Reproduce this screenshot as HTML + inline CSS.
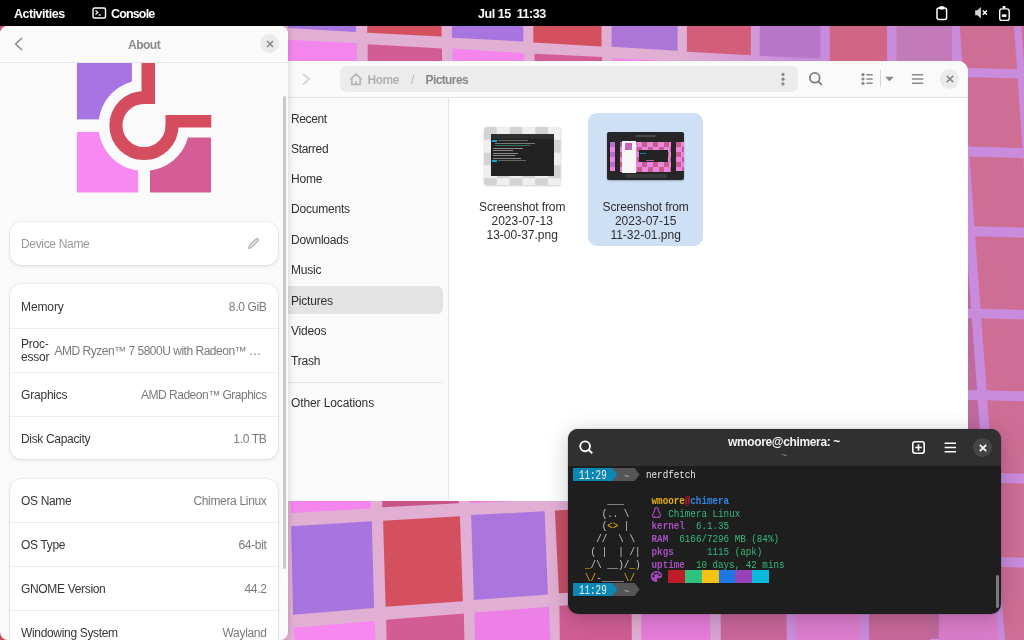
<!DOCTYPE html>
<html><head><meta charset="utf-8">
<style>
*{box-sizing:border-box}
html,body{margin:0;padding:0}
body{width:1024px;height:640px;overflow:hidden;position:relative;background:#cd6c8e;font-family:"Liberation Sans",sans-serif;font-size:12px;letter-spacing:-0.3px}
.a{position:absolute}
#top,#about,#fm,#term{will-change:transform}
.t{position:absolute;white-space:nowrap;line-height:14px}
.b{font-weight:bold;letter-spacing:-0.5px}
#wall{position:absolute;left:0;top:0}
#top{left:0;top:0;width:1024px;height:26px;background:#000;color:#fff}
#about{left:0;top:26px;width:288px;height:614px;background:#fafafa;border-radius:8px;box-shadow:0 0 8px rgba(0,0,0,.18);overflow:hidden}
#fm{left:288px;top:61px;width:680px;height:440px;background:#fff;border-radius:0 10px 0 0;overflow:hidden}
#term{left:568px;top:429px;width:433px;height:185px;background:#1e1e1e;border-radius:10px;overflow:hidden;box-shadow:0 0 0 1px rgba(0,0,0,.08),0 4px 22px rgba(0,0,0,.22)}
.card{position:absolute;left:10px;width:268px;background:#fff;border-radius:12px;box-shadow:0 0 0 1px rgba(0,0,0,.03),0 1px 3px 1px rgba(0,0,0,.07)}
.row{position:absolute;left:0;width:268px;height:44px;border-top:1px solid #ececec}
.lbl{color:#363636}
.dim{color:#7a7a7a}
.side{color:#303030;left:3px}
.mono{font-family:"Liberation Mono",monospace;letter-spacing:0}
</style></head>
<body>
<svg id="wall" width="1024" height="640" viewBox="0 0 1024 640">
<defs><linearGradient id="wg" x1="0" y1="0" x2="1024" y2="0" gradientUnits="userSpaceOnUse"><stop offset="0.66" stop-color="#e1afd3"/><stop offset="0.78" stop-color="#c98bdc"/></linearGradient></defs>
<rect width="1024" height="640" fill="url(#wg)"/>
<polygon points="0.0,0.0 30.0,0.0 30.0,60.0 0.0,60.0" fill="#d0568f"/>
<polygon points="0.0,600.0 30.0,600.0 30.0,640.0 0.0,640.0" fill="#cc4a60"/>
<polygon points="288.0,0.0 356.0,0.0 356.0,31.9 288.0,28.0" fill="#a874e0"/>
<polygon points="367.2,0.0 441.6,0.0 441.6,36.6 367.2,32.8" fill="#d4505f"/>
<polygon points="452.0,0.0 523.3,0.0 523.3,41.5 452.0,37.7" fill="#a874e0"/>
<polygon points="533.3,0.0 601.5,0.0 601.5,46.5 533.3,42.4" fill="#d4505f"/>
<polygon points="611.6,0.0 677.6,0.0 677.6,50.7 611.6,46.8" fill="#ac76d8"/>
<polygon points="686.9,0.0 750.9,0.0 750.9,55.2 686.9,51.7" fill="#d35e7c"/>
<polygon points="759.7,0.0 820.3,0.0 820.3,58.6 759.7,55.9" fill="#b877c8"/>
<polygon points="829.7,0.0 887.1,0.0 887.1,66.0 829.7,62.0" fill="#d06585"/>
<polygon points="896.6,0.0 952.1,0.0 952.1,69.0 896.6,66.0" fill="#c27ab8"/>
<polygon points="288.0,39.8 356.7,43.3 356.7,120.0 288.0,120.0" fill="#f385ed"/>
<polygon points="367.7,44.2 442.0,48.6 442.0,120.0 367.7,120.0" fill="#d35c94"/>
<polygon points="452.5,48.6 524.2,53.0 524.2,120.0 452.5,120.0" fill="#f385ed"/>
<polygon points="534.5,53.8 602.0,57.0 602.0,120.0 534.5,120.0" fill="#d35c94"/>
<polygon points="612.0,58.2 678.0,61.5 678.0,120.0 612.0,120.0" fill="#f385ed"/>
<polygon points="1017.0,-38.7 1100.0,-36.7 1100.0,71.2 1024.5,69.2" fill="#ce6e94"/>
<polygon points="963.5,76.9 1017.7,78.5 1022.6,148.2 968.6,146.6" fill="#ce6e94"/>
<polygon points="1025.2,78.5 1100.0,80.5 1100.0,150.2 1030.1,148.2" fill="#ce6e94"/>
<polygon points="900.0,75.5 954.0,76.9 959.1,146.6 900.0,145.2" fill="#bf6a9e"/>
<polygon points="969.4,156.6 1023.3,158.2 1028.1,227.8 974.5,226.2" fill="#ce6e94"/>
<polygon points="1030.8,158.2 1100.0,160.2 1100.0,229.8 1035.6,227.8" fill="#ce6e94"/>
<polygon points="900.0,155.2 959.9,156.6 965.0,226.2 900.0,224.8" fill="#bf6a9e"/>
<polygon points="975.2,236.2 1028.8,237.8 1033.9,310.3 980.6,308.7" fill="#ce6e94"/>
<polygon points="1036.3,237.8 1100.0,239.8 1100.0,312.3 1041.4,310.3" fill="#ce6e94"/>
<polygon points="900.0,234.8 965.7,236.2 971.1,308.7 900.0,307.3" fill="#bf6a9e"/>
<polygon points="981.3,318.3 1034.6,319.9 1039.6,391.8 986.6,390.2" fill="#ce6e94"/>
<polygon points="1042.1,319.9 1100.0,321.9 1100.0,393.8 1047.1,391.8" fill="#ce6e94"/>
<polygon points="900.0,316.9 971.8,318.3 977.1,390.2 900.0,388.8" fill="#bf6a9e"/>
<polygon points="987.3,400.2 1040.3,401.8 1045.4,474.3 992.6,472.7" fill="#ce6e94"/>
<polygon points="1047.8,401.8 1100.0,403.8 1100.0,476.3 1052.9,474.3" fill="#ce6e94"/>
<polygon points="900.0,398.8 977.8,400.2 983.1,472.7 900.0,471.3" fill="#bf6a9e"/>
<polygon points="993.4,482.7 1046.1,484.3 1051.3,558.6 998.8,557.0" fill="#ce6e94"/>
<polygon points="1053.6,484.3 1100.0,486.3 1100.0,560.6 1058.8,558.6" fill="#ce6e94"/>
<polygon points="900.0,481.3 983.9,482.7 989.3,557.0 900.0,555.6" fill="#bf6a9e"/>
<polygon points="999.6,567.0 1052.0,568.6 1057.1,641.3 1004.9,639.7" fill="#ce6e94"/>
<polygon points="1059.5,568.6 1100.0,570.6 1100.0,643.3 1064.6,641.3" fill="#ce6e94"/>
<polygon points="900.0,565.6 990.1,567.0 995.4,639.7 900.0,638.3" fill="#bf6a9e"/>
<polygon points="957.8,0.0 1012.2,0.0 1017.0,69.2 962.8,67.7" fill="#ce6e94"/>
<polygon points="290.8,470.0 370.7,470.0 370.7,508.6 290.8,512.9" fill="#f385ed"/>
<polygon points="382.3,470.0 458.8,470.0 458.8,503.3 382.3,507.3" fill="#c8548a"/>
<polygon points="470.0,470.0 546.0,470.0 546.0,499.5 470.0,503.0" fill="#e77fe0"/>
<polygon points="291.2,526.2 371.8,521.3 374.1,608.0 293.1,614.7" fill="#a874e0"/>
<polygon points="383.1,520.7 459.9,516.3 462.9,601.2 385.6,606.8" fill="#d4505f"/>
<polygon points="471.1,515.1 544.6,511.2 547.9,594.4 473.9,600.1" fill="#aa75dc"/>
<polygon points="554.9,510.4 640.0,506.0 643.0,589.0 558.9,593.3" fill="#c75068"/>
<polygon points="294.2,627.7 374.7,620.9 376.0,660.0 295.0,660.0" fill="#f688f0"/>
<polygon points="386.2,619.8 463.8,613.6 465.0,660.0 387.0,660.0" fill="#d35c94"/>
<polygon points="474.4,612.5 549.1,606.8 551.0,660.0 475.0,660.0" fill="#ec80e6"/>
<polygon points="559.4,605.7 631.5,601.0 632.0,660.0 560.0,660.0" fill="#cf5e93"/>
<polygon points="641.0,600.0 710.0,596.0 711.0,660.0 641.5,660.0" fill="#e67cd9"/>
<polygon points="720.5,595.0 786.2,591.0 787.0,660.0 721.0,660.0" fill="#c9669a"/>
<polygon points="795.5,590.0 859.7,587.0 860.5,660.0 796.0,660.0" fill="#dc7dcd"/>
<polygon points="868.8,586.0 929.9,583.0 930.5,660.0 869.3,660.0" fill="#c8689a"/>
<polygon points="938.5,582.0 994.0,580.0 1000.0,660.0 939.0,660.0" fill="#d97cc8"/>
</svg>

<!-- top bar -->
<div id="top" class="a">
  <div class="t b" style="left:14px;top:6.5px;font-size:12.5px">Activities</div>
  <svg class="a" style="left:92px;top:7px" width="15" height="12" viewBox="0 0 15 12"><rect x="1" y="1" width="12.5" height="10" rx="1.5" fill="none" stroke="#fff" stroke-width="1.4"/><path d="M3.5 3.5 L5.8 5.5 L3.5 7.5" fill="none" stroke="#fff" stroke-width="1.2"/><path d="M6.5 8 H9" stroke="#fff" stroke-width="1.1"/></svg>
  <div class="t b" style="left:111px;top:6.5px;font-size:12.5px;letter-spacing:-0.85px">Console</div>
  <div class="t b" style="left:478px;top:6.5px;font-size:12.5px;letter-spacing:-0.45px">Jul 15&nbsp;&nbsp;11:33</div>
  <svg class="a" style="left:930px;top:2px" width="84" height="22" viewBox="0 0 84 22">
    <rect x="7" y="5.9" width="9.6" height="11.6" rx="2" fill="none" stroke="#fff" stroke-width="1.5"/>
    <rect x="9.2" y="4.2" width="5.2" height="3.2" rx="1.2" fill="#fff"/>
    <path d="M45.2 8.3 H47.5 L50.9 4.9 V16.6 L47.5 13.2 H45.2 Z" fill="#d6d6d6"/>
    <path d="M52.8 8.6 L56.8 12.7 M56.8 8.6 L52.8 12.7" stroke="#fff" stroke-width="1.4"/>
    <rect x="69.7" y="6.9" width="9.5" height="11.5" rx="2.2" fill="none" stroke="#fff" stroke-width="1.4"/>
    <rect x="72.6" y="4.1" width="2.9" height="2.4" rx="0.8" fill="#fff"/>
    <rect x="71.9" y="12.4" width="4.5" height="2.5" fill="#fff"/>
  </svg>
</div>

<!-- file manager -->
<div id="fm" class="a">
 <div class="a" style="left:-288px;top:-61px;width:1024px;height:640px">
  <!-- header -->
  <div class="a" style="left:288px;top:61px;width:680px;height:37px;background:#fafafa;border-bottom:1px solid #e3e3e3"></div>
  <svg class="a" style="left:300px;top:72px" width="12" height="14" viewBox="0 0 12 14"><path d="M3 2.2 L9.3 6.8 L3 12.5" fill="none" stroke="#cfcfcf" stroke-width="1.5"/></svg>
  <div class="a" style="left:339.5px;top:65.7px;width:458px;height:26.8px;border-radius:6px;background:#ececec"></div>
  <svg class="a" style="left:348px;top:72px" width="16" height="14" viewBox="0 0 16 14"><path d="M2.2 7.6 L8 2 L13.8 7.6 M3.8 6.4 V12.4 H12.2 V6.4 M8 12.4 V9" fill="none" stroke="#b8b8b8" stroke-width="1.7" stroke-linejoin="round"/></svg>
  <div class="t b" style="left:367.5px;top:73.2px;color:#b2b2b2;letter-spacing:-0.45px">Home</div>
  <div class="t" style="left:411px;top:73.2px;color:#b5b5b5">/</div>
  <div class="t b" style="left:425.5px;top:73.2px;color:#878787;letter-spacing:-0.6px">Pictures</div>
  <svg class="a" style="left:779px;top:71px" width="8" height="16" viewBox="0 0 8 16"><circle cx="4" cy="3.4" r="1.6" fill="#8a8a8a"/><circle cx="4" cy="8.2" r="1.6" fill="#8a8a8a"/><circle cx="4" cy="12.9" r="1.6" fill="#8a8a8a"/></svg>
  <svg class="a" style="left:807px;top:70px" width="18" height="18" viewBox="0 0 18 18"><circle cx="7.8" cy="7.8" r="4.9" fill="none" stroke="#7c7c7c" stroke-width="1.8"/><path d="M11.3 11.3 L14.8 14.8" stroke="#7c7c7c" stroke-width="1.9"/></svg>
  <svg class="a" style="left:860px;top:72px" width="16" height="14" viewBox="0 0 16 14"><circle cx="3" cy="2.7" r="1.6" fill="#8a8a8a"/><circle cx="3" cy="7" r="1.6" fill="#8a8a8a"/><circle cx="3" cy="11.3" r="1.6" fill="#8a8a8a"/><path d="M6.3 2.7 H12.7 M6.3 7 H12.7 M6.3 11.3 H12.7" stroke="#8a8a8a" stroke-width="1.4"/></svg>
  <div class="a" style="left:880px;top:70.4px;width:1px;height:16.6px;background:#d6d6d6"></div>
  <svg class="a" style="left:884px;top:75px" width="11" height="8" viewBox="0 0 11 8"><path d="M1 1.7 H9.9 L5.45 6.2 Z" fill="#8a8a8a"/></svg>
  <svg class="a" style="left:910px;top:72px" width="15" height="14" viewBox="0 0 15 14"><path d="M1.9 2.7 H13.2 M1.9 7 H13.2 M1.9 11.3 H13.2" stroke="#8a8a8a" stroke-width="1.4"/></svg>
  <div class="a" style="left:939.8px;top:69.3px;width:19.4px;height:19.4px;border-radius:50%;background:#ebebeb"></div>
  <svg class="a" style="left:944.5px;top:74px" width="10" height="10" viewBox="0 0 10 10"><path d="M1.8 1.8 L8.2 8.2 M8.2 1.8 L1.8 8.2" stroke="#8a8a8a" stroke-width="1.7"/></svg>

  <!-- sidebar -->
  <div class="a" style="left:288px;top:98px;width:160.5px;height:403px;background:#fafafa;border-right:1px solid #e6e6e6"></div>
  <div class="a" style="left:280px;top:285.5px;width:163px;height:28.6px;border-radius:6px;background:#e3e3e3"></div>
  <div class="a" style="left:288px;top:381.5px;width:155px;height:1px;background:#e6e6e6"></div>
  <div class="t side" style="left:291px;top:111.6px;letter-spacing:-0.39px">Recent</div>
  <div class="t side" style="left:291px;top:141.7px;letter-spacing:-0.3px">Starred</div>
  <div class="t side" style="left:291px;top:172.0px;letter-spacing:-0.2px">Home</div>
  <div class="t side" style="left:291px;top:202.3px;letter-spacing:-0.2px">Documents</div>
  <div class="t side" style="left:291px;top:232.9px;letter-spacing:-0.2px">Downloads</div>
  <div class="t side" style="left:291px;top:263.3px;letter-spacing:-0.2px">Music</div>
  <div class="t side" style="left:291px;top:293.7px;letter-spacing:-0.2px">Pictures</div>
  <div class="t side" style="left:291px;top:324.2px;letter-spacing:-0.2px">Videos</div>
  <div class="t side" style="left:291px;top:354.3px;letter-spacing:-0.2px">Trash</div>
  <div class="t side" style="left:291px;top:395.5px;letter-spacing:-0.11px">Other Locations</div>

  <!-- files -->
  <div class="a" style="left:484.2px;top:127.3px;width:77px;height:57.4px;border-radius:3px;overflow:hidden;box-shadow:0 1px 2px rgba(0,0,0,.2);background:repeating-conic-gradient(#d3d3d3 0 25%,#efefef 0 50%) 12.8px 0/25.6px 25.6px"></div>
  <div class="a" style="left:491px;top:134.1px;width:62.9px;height:41.6px;background:#222">
    <div class="a" style="left:0;top:0;width:62.9px;height:5px;background:#2e2e2e"></div>
    <div class="a" style="left:1px;top:6px;width:5px;height:1.6px;background:#1e9bd0"></div>
    <div class="a" style="left:7px;top:6px;width:30px;height:1.2px;background:#666"></div>
    <div class="a" style="left:4px;top:9px;width:40px;height:1px;background:#777"></div>
    <div class="a" style="left:4px;top:11px;width:35px;height:1px;background:#2a7a5a"></div>
    <div class="a" style="left:2px;top:13.5px;width:30px;height:1px;background:#888"></div>
    <div class="a" style="left:2px;top:16px;width:20px;height:1px;background:#888"></div>
    <div class="a" style="left:2px;top:18.5px;width:25px;height:1px;background:#888"></div>
    <div class="a" style="left:2px;top:21px;width:22px;height:1px;background:#888"></div>
    <div class="a" style="left:2px;top:23.5px;width:28px;height:1px;background:#888"></div>
    <div class="a" style="left:1px;top:26px;width:5px;height:1.6px;background:#1e9bd0"></div>
    <div class="a" style="left:7px;top:26px;width:28px;height:1.2px;background:#666"></div>
  </div>
  <div class="t" style="left:479px;top:199.8px;width:86.3px;text-align:center;color:#2e2e2e;letter-spacing:-0.12px">Screenshot from</div>
  <div class="t" style="left:479px;top:213.5px;width:86.3px;text-align:center;color:#2e2e2e;letter-spacing:0">2023-07-13</div>
  <div class="t" style="left:479px;top:227.8px;width:86.3px;text-align:center;color:#2e2e2e;letter-spacing:0">13-00-37.png</div>

  <div class="a" style="left:588.2px;top:112.9px;width:114.9px;height:133px;border-radius:9px;background:#cde0f6"></div>
  <div class="a" style="left:607.3px;top:131.8px;width:76.5px;height:47.9px;background:#262626;border-radius:2px;overflow:hidden;box-shadow:0 1px 2px rgba(0,0,0,.25)">
    <div class="a" style="left:28px;top:3px;width:21px;height:2px;background:#4a4a4a;border-radius:1px"></div>
    <div class="a" style="left:12.5px;top:10px;width:51px;height:30.5px;background:repeating-conic-gradient(#e986e0 0 25%,#c95b8e 0 50%) 0 0/11px 10px"></div>
    <div class="a" style="left:2.5px;top:10.5px;width:5px;height:29px;background:repeating-conic-gradient(#e986e0 0 25%,#b86fd0 0 50%) 0 0/10px 10px"></div>
    <div class="a" style="left:69px;top:10.5px;width:8px;height:29px;background:repeating-conic-gradient(#e986e0 0 25%,#c95b8e 0 50%) 0 0/11px 10px"></div>
    <div class="a" style="left:14.5px;top:9.5px;width:14.5px;height:31.5px;background:#f6f6f6"></div>
    <div class="a" style="left:18px;top:11.5px;width:7px;height:7px;background:repeating-conic-gradient(#d55c95 0 25%,#b070e0 0 50%) 0 0/7px 7px"></div>
    <div class="a" style="left:31.5px;top:18.5px;width:29px;height:12px;background:#232323"></div>
    <div class="a" style="left:33px;top:21px;width:6px;height:1.5px;background:#0a87b3"></div>
    <div class="a" style="left:39px;top:28px;width:8px;height:1.5px;background:#c060b0"></div>
    <div class="a" style="left:18px;top:42.5px;width:42px;height:3.5px;background:#3a3a3a;border-radius:1px"></div>
  </div>
  <div class="t" style="left:588.2px;top:199.8px;width:114.9px;text-align:center;color:#2e2e2e;letter-spacing:-0.12px">Screenshot from</div>
  <div class="t" style="left:588.2px;top:213.5px;width:114.9px;text-align:center;color:#2e2e2e;letter-spacing:0">2023-07-15</div>
  <div class="t" style="left:588.2px;top:227.8px;width:114.9px;text-align:center;color:#2e2e2e;letter-spacing:0">11-32-01.png</div>
 </div>
</div>


<!-- about -->
<div id="about" class="a">
 <div class="a" style="left:0;top:-26px;width:288px;height:700px">
  <!-- logo -->
  <svg class="a" style="left:0;top:0" width="288" height="220" viewBox="0 0 288 220">
    <defs><clipPath id="lc"><rect x="0" y="63" width="288" height="160"/></clipPath></defs>
    <g clip-path="url(#lc)">
      <rect x="76.9" y="40" width="55" height="79.4" fill="#a873e2"/>
      <rect x="76.9" y="131.9" width="61.2" height="60.6" fill="#f68af2"/>
      <rect x="150" y="137.5" width="61" height="55" fill="#d55c95"/>
      <circle cx="144" cy="125.5" r="45.5" fill="#fafafa"/>
      <path d="M144 97.45 A28.05 28.05 0 1 0 172.05 125.5" fill="none" stroke="#d54c5e" stroke-width="13.1"/>
      <rect x="141.5" y="40" width="13.5" height="64" fill="#d54c5e"/>
      <rect x="165.5" y="115" width="45.75" height="12.5" fill="#d54c5e"/>
    </g>
  </svg>
  <!-- header -->
  <div class="a" style="left:0;top:26px;width:288px;height:37px;background:#fafafa;border-bottom:1px solid #e8e8e8"></div>
  <svg class="a" style="left:12px;top:36px" width="14" height="16" viewBox="0 0 14 16"><path d="M10 2 L3.6 8 L10 14" fill="none" stroke="#8c8c8c" stroke-width="1.6"/></svg>
  <div class="t b" style="left:128px;top:38.3px;color:#8b8b8b">About</div>
  <div class="a" style="left:260px;top:34.4px;width:19px;height:19px;border-radius:50%;background:#ebebeb"></div>
  <svg class="a" style="left:264.5px;top:38.9px" width="10" height="10" viewBox="0 0 10 10"><path d="M2 2 L8 8 M8 2 L2 8" stroke="#8a8a8a" stroke-width="1.7"/></svg>

  <!-- device name card -->
  <div class="card" style="top:221.5px;height:43.5px"></div>
  <div class="t" style="left:21px;top:237.1px;color:#9a9a9a;letter-spacing:-0.33px">Device Name</div>
  <svg class="a" style="left:246px;top:236px" width="15" height="15" viewBox="0 0 15 15"><path d="M3 12.3 L3.5 9.7 L10.1 3.1 A1.25 1.25 0 0 1 11.9 4.9 L5.3 11.5 Z" fill="none" stroke="#bababa" stroke-width="1.7" stroke-linejoin="round"/></svg>

  <!-- card 2 -->
  <div class="card" style="top:284px;height:175px">
    <div class="row" style="top:43.8px"></div>
    <div class="row" style="top:87.7px"></div>
    <div class="row" style="top:131.5px;height:43.5px"></div>
  </div>
  <div class="t lbl" style="left:21px;top:299.8px;letter-spacing:-0.1px">Memory</div>
  <div class="t dim" style="right:21.5px;top:299.8px;letter-spacing:-0.33px">8.0 GiB</div>
  <div class="t lbl" style="left:21px;top:336.7px;letter-spacing:-0.2px">Proc-</div>
  <div class="t lbl" style="left:21px;top:350.4px;letter-spacing:-0.2px">essor</div>
  <div class="t dim" style="left:54.5px;top:343.5px;letter-spacing:-0.49px">AMD Ryzen™ 7 5800U with Radeon™ …</div>
  <div class="t lbl" style="left:21px;top:387.8px;letter-spacing:-0.2px">Graphics</div>
  <div class="t dim" style="right:21.5px;top:387.8px;letter-spacing:-0.5px">AMD Radeon™ Graphics</div>
  <div class="t lbl" style="left:21px;top:431.7px;letter-spacing:-0.33px">Disk Capacity</div>
  <div class="t dim" style="right:21.5px;top:431.7px;letter-spacing:-0.33px">1.0 TB</div>

  <!-- card 3 -->
  <div class="card" style="top:478.5px;height:200px">
    <div class="row" style="top:43.3px"></div>
    <div class="row" style="top:87.7px"></div>
    <div class="row" style="top:131.6px"></div>
  </div>
  <div class="t lbl" style="left:21px;top:494.3px;letter-spacing:-0.33px">OS Name</div>
  <div class="t dim" style="right:21.5px;top:494.3px;letter-spacing:-0.33px">Chimera Linux</div>
  <div class="t lbl" style="left:21px;top:538.2px;letter-spacing:-0.33px">OS Type</div>
  <div class="t dim" style="right:21.5px;top:538.2px;letter-spacing:-0.33px">64-bit</div>
  <div class="t lbl" style="left:21px;top:582.1px;letter-spacing:-0.33px">GNOME Version</div>
  <div class="t dim" style="right:21.5px;top:582.1px;letter-spacing:-0.33px">44.2</div>
  <div class="t lbl" style="left:21px;top:626.0px;letter-spacing:-0.33px">Windowing System</div>
  <div class="t dim" style="right:21.5px;top:626.0px;letter-spacing:-0.33px">Wayland</div>

  <!-- scrollbar -->
  <div class="a" style="left:283px;top:95.7px;width:3px;height:473.3px;border-radius:2px;background:#c9c9c9"></div>
 </div>
</div>

<!-- terminal -->
<div id="term" class="a">
 <div class="a" style="left:-568px;top:-429px;width:1024px;height:640px">
  <div class="a" style="left:568px;top:429px;width:433px;height:37px;background:#303030"></div>
  <svg class="a" style="left:577px;top:438px" width="18" height="18" viewBox="0 0 18 18"><circle cx="8.1" cy="8.3" r="4.9" fill="none" stroke="#fff" stroke-width="1.9"/><path d="M11.6 11.8 L15.2 15.3" stroke="#fff" stroke-width="2"/></svg>
  <div class="t b" style="left:668px;top:434.6px;width:232px;text-align:center;color:#f2f2f2;letter-spacing:-0.36px">wmoore@chimera: ~</div>
  <div class="t" style="left:668px;top:449px;width:232px;text-align:center;color:#8a8a8a;font-size:10px">~</div>
  <svg class="a" style="left:910px;top:439px" width="17" height="17" viewBox="0 0 17 17"><rect x="2.8" y="2.8" width="11.4" height="11.4" rx="2.2" fill="none" stroke="#fff" stroke-width="1.6"/><path d="M8.5 5.3 V11.7 M5.3 8.5 H11.7" stroke="#fff" stroke-width="1.6"/></svg>
  <svg class="a" style="left:942px;top:439px" width="17" height="17" viewBox="0 0 17 17"><path d="M2.6 4.2 H14 M2.6 8.5 H14 M2.6 12.8 H14" stroke="#fff" stroke-width="1.5"/></svg>
  <div class="a" style="left:972.8px;top:437.8px;width:19.4px;height:19.4px;border-radius:50%;background:#454545"></div>
  <svg class="a" style="left:977.5px;top:442.5px" width="10" height="10" viewBox="0 0 10 10"><path d="M1.8 1.8 L8.2 8.2 M8.2 1.8 L1.8 8.2" stroke="#fff" stroke-width="1.8"/></svg>
  <svg class="a" style="left:572.8px;top:467.50px" width="68" height="13" viewBox="0 0 68 13"><path d="M39.3 0 H61.6 L66.7 6.45 L61.6 12.9 H39.3 Z" fill="#555"/><path d="M0 0 H39.3 L44.4 6.45 L39.3 12.9 H0 Z" fill="#0a87b3"/></svg>
  <svg class="a" style="left:572.8px;top:583.15px" width="68" height="13" viewBox="0 0 68 13"><path d="M39.3 0 H61.6 L66.7 6.45 L61.6 12.9 H39.3 Z" fill="#555"/><path d="M0 0 H39.3 L44.4 6.45 L39.3 12.9 H0 Z" fill="#0a87b3"/></svg>
  <div class="a mono" style="left:573.5px;top:469.0px;width:600px;height:140px;transform:scaleX(0.8029);transform-origin:0 0;font-size:11.5px">
   <div class="t" style="left:62.10px;top:0.00px;line-height:12.85px;color:#b5b5b5;margin-top:1.5px">~</div>
   <div class="t" style="left:89.70px;top:0.00px;line-height:12.85px;color:#e6e6e6">nerdfetch</div>
   <div class="t" style="left:62.10px;top:115.65px;line-height:12.85px;color:#b5b5b5;margin-top:1.5px">~</div>
   <div class="t" style="left:41.40px;top:25.70px;line-height:12.85px;color:#c8c8c6">___</div>
   <div class="t" style="left:96.60px;top:25.70px;line-height:12.85px;color:#e9b00c;font-weight:bold">wmoore</div>
   <div class="t" style="left:138.00px;top:25.70px;line-height:12.85px;color:#e01b24;font-weight:bold">@</div>
   <div class="t" style="left:144.90px;top:25.70px;line-height:12.85px;color:#2f86e6;font-weight:bold">chimera</div>
   <div class="t" style="left:34.50px;top:38.55px;line-height:12.85px;color:#c8c8c6">(..</div>
   <div class="t" style="left:62.10px;top:38.55px;line-height:12.85px;color:#c8c8c6">\</div>
   <div class="t" style="left:117.30px;top:38.55px;line-height:12.85px;color:#33ba7b">Chimera&nbsp;Linux</div>
   <div class="t" style="left:34.50px;top:51.40px;line-height:12.85px;color:#c8c8c6">(</div>
   <div class="t" style="left:41.40px;top:51.40px;line-height:12.85px;color:#e9b00c">&lt;&gt;</div>
   <div class="t" style="left:62.10px;top:51.40px;line-height:12.85px;color:#c8c8c6">|</div>
   <div class="t" style="left:96.60px;top:51.40px;line-height:12.85px;color:#a64fc0;font-weight:bold">kernel</div>
   <div class="t" style="left:151.80px;top:51.40px;line-height:12.85px;color:#33ba7b">6.1.35</div>
   <div class="t" style="left:27.60px;top:64.25px;line-height:12.85px;color:#c8c8c6">//</div>
   <div class="t" style="left:55.20px;top:64.25px;line-height:12.85px;color:#c8c8c6">\&nbsp;\</div>
   <div class="t" style="left:96.60px;top:64.25px;line-height:12.85px;color:#a64fc0;font-weight:bold">RAM</div>
   <div class="t" style="left:131.10px;top:64.25px;line-height:12.85px;color:#33ba7b">6166/7296&nbsp;MB&nbsp;(84%)</div>
   <div class="t" style="left:20.70px;top:77.10px;line-height:12.85px;color:#c8c8c6">(&nbsp;|&nbsp;&nbsp;|&nbsp;/|</div>
   <div class="t" style="left:96.60px;top:77.10px;line-height:12.85px;color:#a64fc0;font-weight:bold">pkgs</div>
   <div class="t" style="left:165.60px;top:77.10px;line-height:12.85px;color:#33ba7b">1115&nbsp;(apk)</div>
   <div class="t" style="left:13.80px;top:89.95px;line-height:12.85px;color:#e9b00c">_</div>
   <div class="t" style="left:20.70px;top:89.95px;line-height:12.85px;color:#c8c8c6">/\&nbsp;__)/</div>
   <div class="t" style="left:69.00px;top:89.95px;line-height:12.85px;color:#e9b00c">_</div>
   <div class="t" style="left:75.90px;top:89.95px;line-height:12.85px;color:#c8c8c6">)</div>
   <div class="t" style="left:96.60px;top:89.95px;line-height:12.85px;color:#a64fc0;font-weight:bold">uptime</div>
   <div class="t" style="left:151.80px;top:89.95px;line-height:12.85px;color:#33ba7b">10&nbsp;days,&nbsp;42&nbsp;mins</div>
   <div class="t" style="left:13.80px;top:102.80px;line-height:12.85px;color:#e9b00c">\/</div>
   <div class="t" style="left:27.60px;top:102.80px;line-height:12.85px;color:#c8c8c6">-____</div>
   <div class="t" style="left:62.10px;top:102.80px;line-height:12.85px;color:#e9b00c">\/</div>
  </div>
  <div class="a mono" style="left:579.04px;top:469.70px;transform:scaleX(0.7103);transform-origin:0 0;font-size:13px"><div class="t" style="left:0;top:0;line-height:12.85px;color:#eeeeee">11:29</div></div>
  <div class="a mono" style="left:579.04px;top:585.35px;transform:scaleX(0.7103);transform-origin:0 0;font-size:13px"><div class="t" style="left:0;top:0;line-height:12.85px;color:#eeeeee">11:29</div></div>
  <svg class="a" style="left:651.06px;top:506.05px" width="11" height="13" viewBox="0 0 11 13"><path d="M5.5 1.5 C4 1.5 3.7 3 3.7 4 C3.7 5.5 1.5 7.5 1.5 10 C1.5 11 2.5 11.5 5.5 11.5 C8.5 11.5 9.5 11 9.5 10 C9.5 7.5 7.3 5.5 7.3 4 C7.3 3 7 1.5 5.5 1.5 Z" fill="none" stroke="#a347ba" stroke-width="1.2"/><path d="M2.5 11.5 L4 10 M8.5 11.5 L7 10" stroke="#a347ba" stroke-width="1"/></svg>
  <svg class="a" style="left:650.06px;top:570.30px" width="13" height="13" viewBox="0 0 13 13"><path d="M6.5 1 C3.3 1 0.8 3.4 0.8 6.4 C0.8 9.4 3.3 11.9 6.3 11.9 C7.2 11.9 7.5 11.3 7.5 10.8 C7.5 10.2 7 9.9 7 9.3 C7 8.6 7.6 8.2 8.3 8.2 H9.6 C11 8.2 12.2 7.1 12.2 5.7 C12.2 3 9.7 1 6.5 1 Z" fill="#a347ba"/><circle cx="3.3" cy="6.2" r="1.1" fill="#1e1e1e"/><circle cx="4.6" cy="3.7" r="1.1" fill="#1e1e1e"/><circle cx="7.4" cy="3.3" r="1.1" fill="#1e1e1e"/><circle cx="9.6" cy="5" r="1.1" fill="#1e1e1e"/></svg>
  <div class="a" style="left:667.90px;top:570px;width:17.17px;height:13px;background:#c01c28"></div>
  <div class="a" style="left:684.77px;top:570px;width:17.17px;height:13px;background:#2ec27e"></div>
  <div class="a" style="left:701.63px;top:570px;width:17.17px;height:13px;background:#f5c211"></div>
  <div class="a" style="left:718.50px;top:570px;width:17.17px;height:13px;background:#1e78e4"></div>
  <div class="a" style="left:735.37px;top:570px;width:17.17px;height:13px;background:#9841bb"></div>
  <div class="a" style="left:752.23px;top:570px;width:17.17px;height:13px;background:#0ab9dc"></div>
  <div class="a" style="left:996px;top:575px;width:2.5px;height:33px;border-radius:2px;background:#7a7a7a"></div>
 </div>
</div>
</body></html>
